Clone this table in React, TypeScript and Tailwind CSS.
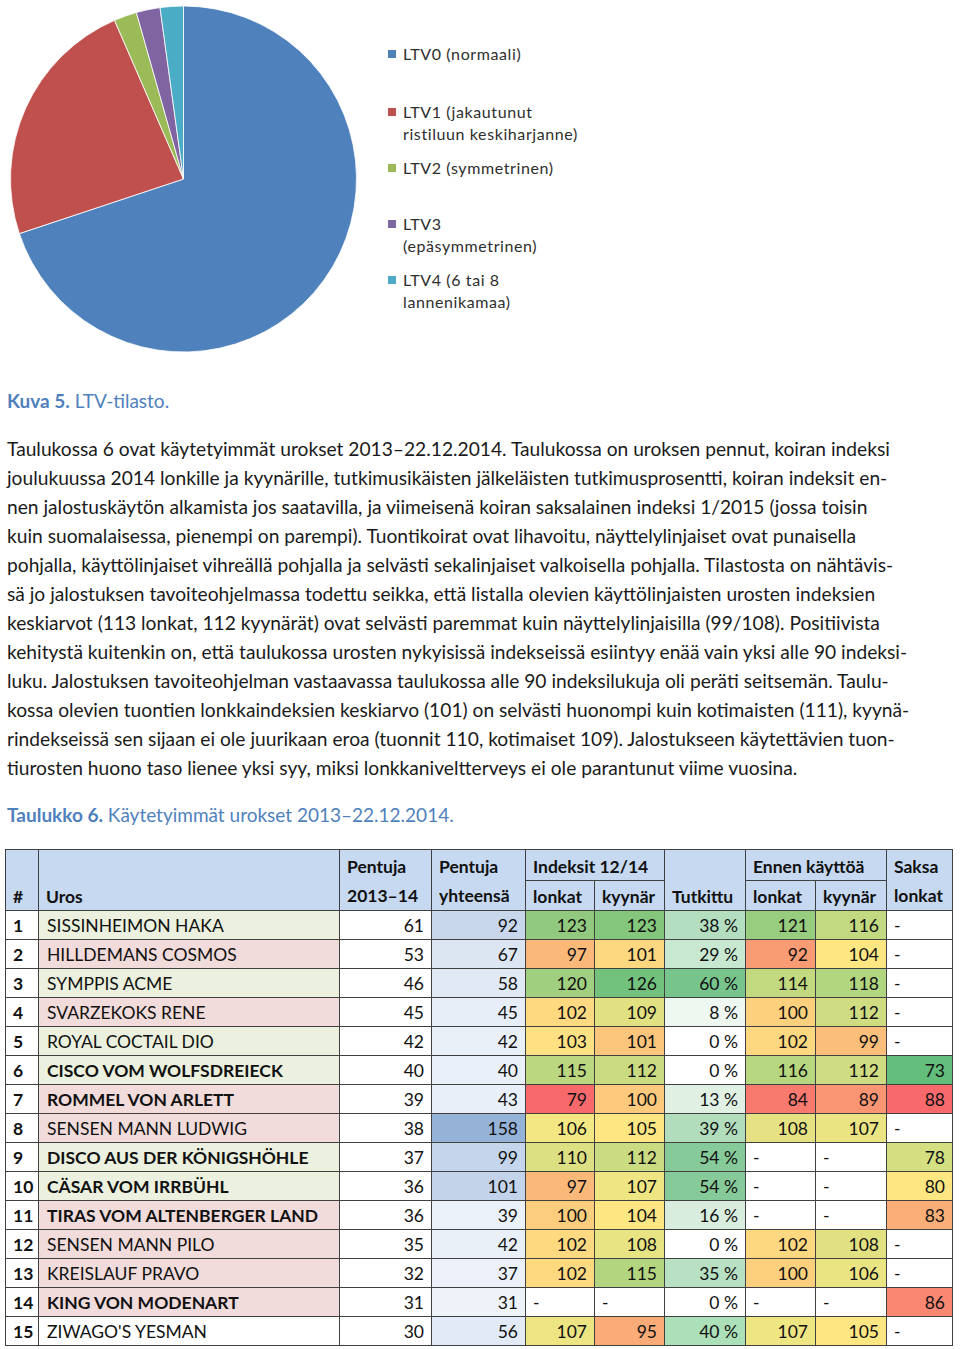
import React from "react";

type Cell = [string, string | null];

const SLICES = [
  { from: 0, to: 251.6, color: "#4f81bd" },
  { from: 251.6, to: 336.5, color: "#c0504d" },
  { from: 336.5, to: 344.2, color: "#9bbb59" },
  { from: 344.2, to: 352.2, color: "#8064a2" },
  { from: 352.2, to: 360, color: "#4bacc6" },
];

const LEGEND = [
  { color: "bg-[#4f81bd]", lines: ["LTV0 (normaali)"], mt: "mt-[43px]" },
  { color: "bg-[#c0504d]", lines: ["LTV1 (jakautunut", "ristiluun keskiharjanne)"], mt: "mt-[36px]" },
  { color: "bg-[#9bbb59]", lines: ["LTV2 (symmetrinen)"], mt: "mt-[12px]" },
  { color: "bg-[#8064a2]", lines: ["LTV3", "(epäsymmetrinen)"], mt: "mt-[34px]" },
  { color: "bg-[#4bacc6]", lines: ["LTV4 (6 tai 8", "lannenikamaa)"], mt: "mt-[12px]" },
];

const PARAGRAPH = [
  "Taulukossa 6 ovat käytetyimmät urokset 2013–22.12.2014. Taulukossa on uroksen pennut, koiran indeksi",
  "joulukuussa 2014 lonkille ja kyynärille, tutkimusikäisten jälkeläisten tutkimusprosentti, koiran indeksit en-",
  "nen jalostuskäytön alkamista jos saatavilla, ja viimeisenä koiran saksalainen indeksi 1/2015 (jossa toisin",
  "kuin suomalaisessa, pienempi on parempi). Tuontikoirat ovat lihavoitu, näyttelylinjaiset ovat punaisella",
  "pohjalla, käyttölinjaiset vihreällä pohjalla ja selvästi sekalinjaiset valkoisella pohjalla. Tilastosta on nähtävis-",
  "sä jo jalostuksen tavoiteohjelmassa todettu seikka, että listalla olevien käyttölinjaisten urosten indeksien",
  "keskiarvot (113 lonkat, 112 kyynärät) ovat selvästi paremmat kuin näyttelylinjaisilla (99/108). Positiivista",
  "kehitystä kuitenkin on, että taulukossa urosten nykyisissä indekseissä esiintyy enää vain yksi alle 90 indeksi-",
  "luku. Jalostuksen tavoiteohjelman vastaavassa taulukossa alle 90 indeksilukuja oli peräti seitsemän. Taulu-",
  "kossa olevien tuontien lonkkaindeksien keskiarvo (101) on selvästi huonompi kuin kotimaisten (111), kyynä-",
  "rindekseissä sen sijaan ei ole juurikaan eroa (tuonnit 110, kotimaiset 109). Jalostukseen käytettävien tuon-",
  "tiurosten huono taso lienee yksi syy, miksi lonkkaniveltterveys ei ole parantunut viime vuosina.",
];

// line: g = käyttölinja (green), p = näyttelylinja (pink), w = sekalinja
const ROWS: { n: number; name: string; line: "g" | "p" | "w"; bold: boolean; cells: Cell[] }[] = [
  { n: 1, name: "SISSINHEIMON HAKA", line: "g", bold: false, cells: [["61", null], ["92", "#c8d7eb"], ["123", "#91ca7e"], ["123", "#84c67c"], ["38 %", "#b4dec0"], ["121", "#98cc7e"], ["116", "#c2d981"], ["-", null]] },
  { n: 2, name: "HILLDEMANS COSMOS", line: "p", bold: false, cells: [["53", null], ["67", "#dce6f2"], ["97", "#fbb979"], ["101", "#fed880"], ["29 %", "#c8e8d1"], ["92", "#f99b73"], ["104", "#fee783"], ["-", null]] },
  { n: 3, name: "SYMPPIS ACME", line: "g", bold: false, cells: [["46", null], ["58", "#e1e9f4"], ["120", "#a0cf7f"], ["126", "#72c17c"], ["60 %", "#78c48d"], ["114", "#c3d980"], ["118", "#b2d580"], ["-", null]] },
  { n: 4, name: "SVARZEKOKS RENE", line: "p", bold: false, cells: [["45", null], ["45", "#e8eef8"], ["102", "#fed980"], ["109", "#e2e182"], ["8 %", "#eef7f0"], ["100", "#fdd07e"], ["112", "#d0dc81"], ["-", null]] },
  { n: 5, name: "ROYAL COCTAIL DIO", line: "g", bold: false, cells: [["42", null], ["42", "#e9f0f8"], ["103", "#fee182"], ["101", "#fcc57c"], ["0 %", null], ["102", "#fed880"], ["99", "#fcbf7b"], ["-", null]] },
  { n: 6, name: "CISCO VOM WOLFSDREIECK", line: "g", bold: true, cells: [["40", null], ["40", "#eaf0f9"], ["115", "#bbd780"], ["112", "#cbdb81"], ["0 %", null], ["116", "#b7d680"], ["112", "#d0dc81"], ["73", "#63be7b"]] },
  { n: 7, name: "ROMMEL VON ARLETT", line: "p", bold: true, cells: [["39", null], ["43", "#e9eff8"], ["79", "#f8696b"], ["100", "#fdca7d"], ["13 %", "#e0f1e4"], ["84", "#f8796e"], ["89", "#f99573"], ["88", "#f8696b"]] },
  { n: 8, name: "SENSEN MANN LUDWIG", line: "p", bold: false, cells: [["38", null], ["158", "#95b3d7"], ["106", "#f3e783"], ["105", "#fee683"], ["39 %", "#b1ddbd"], ["108", "#e6e283"], ["107", "#ebe483"], ["-", null]] },
  { n: 9, name: "DISCO AUS DER KÖNIGSHÖHLE", line: "g", bold: true, cells: [["37", null], ["99", "#c5d5eb"], ["110", "#dde082"], ["112", "#cbdb81"], ["54 %", "#86ca9a"], ["-", null], ["-", null], ["78", "#d4df82"]] },
  { n: 10, name: "CÄSAR VOM IRRBÜHL", line: "g", bold: true, cells: [["36", null], ["101", "#c3d4ea"], ["97", "#fbb979"], ["107", "#efe683"], ["54 %", "#86ca9a"], ["-", null], ["-", null], ["80", "#fee683"]] },
  { n: 11, name: "TIRAS VOM ALTENBERGER LAND", line: "p", bold: true, cells: [["36", null], ["39", "#ebf1f9"], ["100", "#fdcd7e"], ["104", "#fee683"], ["16 %", "#d8eddd"], ["-", null], ["-", null], ["83", "#fbae78"]] },
  { n: 12, name: "SENSEN MANN PILO", line: "p", bold: false, cells: [["35", null], ["42", "#e9f0f8"], ["102", "#fed980"], ["108", "#e8e483"], ["0 %", null], ["102", "#fed880"], ["108", "#e2e182"], ["-", null]] },
  { n: 13, name: "KREISLAUF PRAVO", line: "p", bold: false, cells: [["32", null], ["37", "#ecf1f9"], ["102", "#fed980"], ["115", "#b3d580"], ["35 %", "#b8e0c3"], ["100", "#fdd07e"], ["106", "#eae483"], ["-", null]] },
  { n: 14, name: "KING VON MODENART", line: "p", bold: true, cells: [["31", null], ["31", "#eef3fa"], ["-", null], ["-", null], ["0 %", null], ["-", null], ["-", null], ["86", "#f98771"]] },
  { n: 15, name: "ZIWAGO'S YESMAN", line: "w", bold: false, cells: [["30", null], ["56", "#e1eaf5"], ["107", "#ede583"], ["95", "#fbab77"], ["40 %", "#ace0b8"], ["107", "#eee583"], ["105", "#fee683"], ["-", null]] },
];

const LINE_BG = { g: "bg-[#ebf1de]", p: "bg-[#f2dcdb]", w: "bg-white" };

function arc(cx: number, cy: number, r: number, a0: number, a1: number) {
  const rad = (a: number) => (a * Math.PI) / 180;
  const x0 = cx + r * Math.sin(rad(a0));
  const y0 = cy - r * Math.cos(rad(a0));
  const x1 = cx + r * Math.sin(rad(a1));
  const y1 = cy - r * Math.cos(rad(a1));
  const large = a1 - a0 > 180 ? 1 : 0;
  return `M${cx},${cy} L${x0},${y0} A${r},${r} 0 ${large} 1 ${x1},${y1} Z`;
}

function PieChart() {
  return (
    <div className="flex h-[360px]">
      <svg width="370" height="360" viewBox="0 0 370 360" className="shrink-0">
        {SLICES.map((s) => (
          <path key={s.color} d={arc(183.5, 179, 173, s.from, s.to)} fill={s.color} stroke="#ffffff" strokeWidth={0.8} />
        ))}
      </svg>
      <div className="ml-[18px] flex flex-col text-[16px] leading-[22px] tracking-[0.6px] text-[#2e2e2e]">
        {LEGEND.map((l) => (
          <div key={l.lines[0]} className={`flex ${l.mt}`}>
            <span className={`mt-[7px] mr-[7px] h-[8px] w-[8px] shrink-0 ${l.color}`} />
            <div>
              {l.lines.map((t) => (
                <div key={t}>{t}</div>
              ))}
            </div>
          </div>
        ))}
      </div>
    </div>
  );
}

const TH = "border border-[#404040] bg-[#c6d9f1] px-[7px] pt-[2px] text-left font-bold align-bottom whitespace-nowrap";
const TD = "border border-[#404040] px-[7px] pt-[2px] pb-0 whitespace-nowrap";

function Table() {
  return (
    <table className="ml-[5px] w-[947px] table-fixed border-collapse text-[17.5px] leading-[26px] text-[#111]">
      <colgroup>
        <col className="w-[33px]" />
        <col className="w-[301px]" />
        <col className="w-[92px]" />
        <col className="w-[94px]" />
        <col className="w-[69px]" />
        <col className="w-[70px]" />
        <col className="w-[81px]" />
        <col className="w-[70px]" />
        <col className="w-[71px]" />
        <col className="w-[66px]" />
      </colgroup>
      <thead>
        <tr className="h-[30px]">
          <th rowSpan={2} className={TH}>#</th>
          <th rowSpan={2} className={TH}>Uros</th>
          <th rowSpan={2} className={`${TH} leading-[29px]`}>Pentuja<br />2013–14</th>
          <th rowSpan={2} className={`${TH} leading-[29px]`}>Pentuja<br />yhteensä</th>
          <th colSpan={2} className={TH}>Indeksit 12/14</th>
          <th rowSpan={2} className={TH}>Tutkittu</th>
          <th colSpan={2} className={TH}>Ennen käyttöä</th>
          <th rowSpan={2} className={`${TH} leading-[29px]`}>Saksa<br />lonkat</th>
        </tr>
        <tr className="h-[29px]">
          <th className={TH}>lonkat</th>
          <th className={TH}>kyynär</th>
          <th className={TH}>lonkat</th>
          <th className={TH}>kyynär</th>
        </tr>
      </thead>
      <tbody>
        {ROWS.map((r) => (
          <tr key={r.n} className="h-[29px]">
            <td className={`${TD} font-bold`}>{r.n}</td>
            <td className={`${TD} px-[8px] ${LINE_BG[r.line]} ${r.bold ? "font-bold" : ""}`}>
              {r.name}
            </td>
            {r.cells.map(([text, bg], i) => (
              <td
                key={i}
                className={`${TD} ${text === "-" ? "text-left" : "text-right"}`}
                style={{ backgroundColor: bg ?? "#ffffff" }}
              >
                {text}
              </td>
            ))}
          </tr>
        ))}
      </tbody>
    </table>
  );
}

export default function App() {
  return (
    <div className="min-h-[1349px] w-[960px] bg-white font-['Lato','Liberation_Sans',sans-serif] text-[#1a1a1a]">
      <PieChart />
      <p className="mt-[26px] pl-[7px] text-[19px] leading-[29px] text-[#4f81bd]">
        <span className="font-bold">Kuva 5.</span> LTV-tilasto.
      </p>
      <div className="mt-[19px] pl-[7px] text-[19.2px] leading-[29px]">
        {PARAGRAPH.map((line) => (
          <div key={line} className="whitespace-nowrap">{line}</div>
        ))}
      </div>
      <p className="mt-[18px] pl-[7px] text-[19px] leading-[29px] text-[#4f81bd]">
        <span className="font-bold">Taulukko 6.</span> Käytetyimmät urokset 2013–22.12.2014.
      </p>
      <div className="mt-[20px]">
        <Table />
      </div>
    </div>
  );
}
